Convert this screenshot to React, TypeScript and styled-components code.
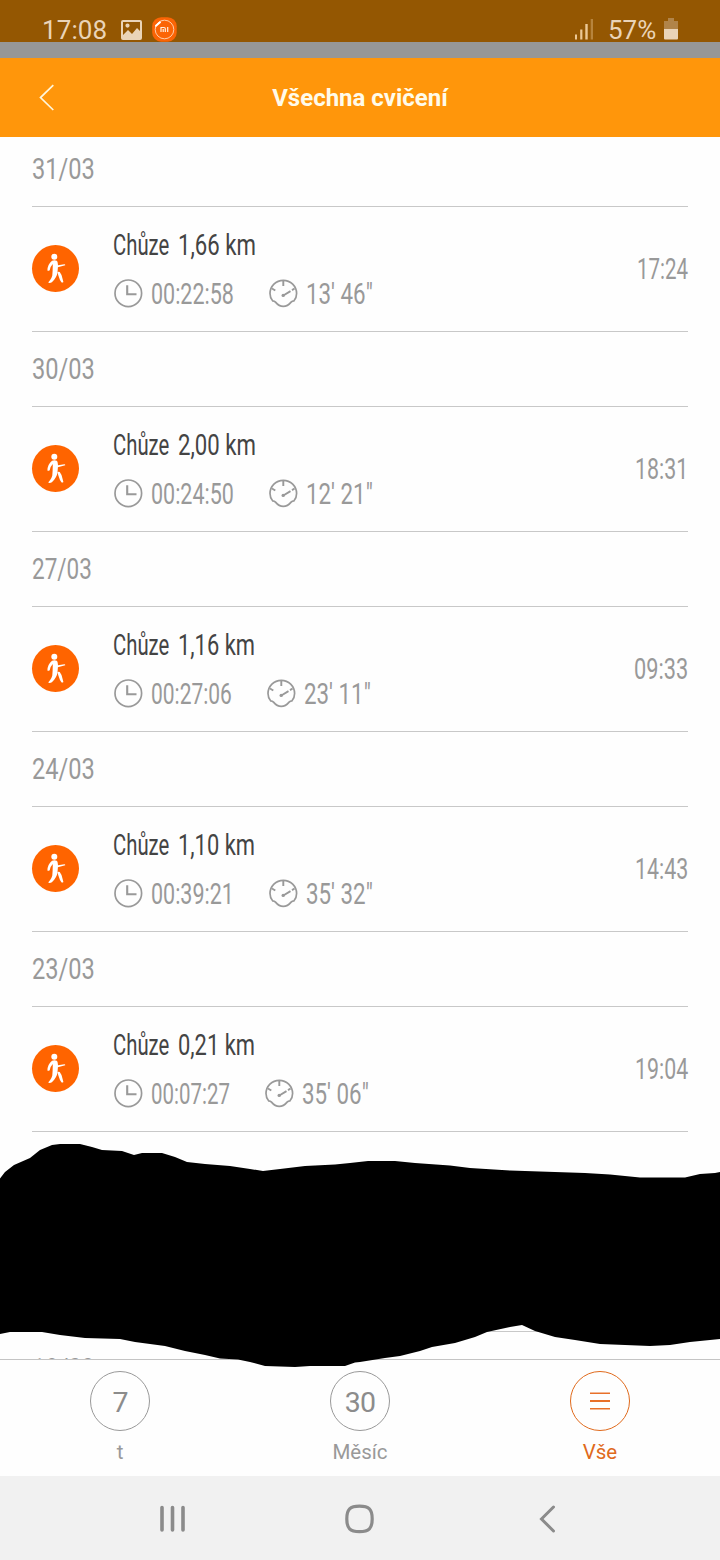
import React, { useLayoutEffect, useRef, useState } from "react";
import styled, { createGlobalStyle } from "styled-components";

const GlobalStyle = createGlobalStyle`
  * { box-sizing: border-box; }
  body { margin: 0; background: #fff; font-family: Roboto, "Liberation Sans", sans-serif; }
  svg { display: block; flex: none; }
`;

const Screen = styled.div`
  position: relative;
  display: flex;
  flex-direction: column;
  width: 720px;
  height: 1560px;
  overflow: hidden;
  background: #fefefe;
`;

const StatusBar = styled.div`
  display: flex;
  align-items: flex-start;
  height: 42px;
  flex: none;
  padding: 15px 41px 0 42px;
  background: #945702;
  color: #ead4b8;
  font-size: 26px;
  line-height: 30px;
`;

const Clock = styled.span`
  width: 65px;
  margin-right: 14px;
  letter-spacing: 0.1px;
`;

const MiIcon = styled.div`
  margin: 2px 0 0 10px;
`;

const StatusRight = styled.div`
  display: flex;
  margin-left: auto;
`;

const Percent = styled.span`
  width: 49px;
  margin: 0 7px 0 15px;
`;

const Divider = styled.div`
  flex: none;
  height: 16px;
  background: #979797;
`;

const Header = styled.header`
  display: grid;
  grid-template-columns: 60px 1fr 60px;
  align-items: center;
  flex: none;
  height: 79px;
  background: #ff960b;
  color: #fffbea;
`;

const BackButton = styled.div`
  padding-left: 38px;
`;

const Title = styled.h1`
  margin: 0;
  text-align: center;
  font-size: 24px;
  font-weight: 700;
  line-height: 30px;
`;

const List = styled.main`
  flex: none;
  height: 1222px;
  overflow: hidden;
  padding: 0 32px;
`;

const Sections = styled.div`
  margin-top: -5px;
`;

const DateHeader = styled.div`
  display: flex;
  align-items: center;
  height: 75px;
  padding-bottom: 2px;
  border-bottom: 1px solid #c8c8c8;
  color: #999;
`;

const Row = styled.div`
  display: flex;
  align-items: center;
  height: 125px;
  border-bottom: 1px solid #c8c8c8;
  color: #999;
`;

const Badge = styled.div`
  width: 47px;
  height: 47px;
  margin: 0 34px 2px 0;
  border-radius: 50%;
  background: #ff6400;
`;

const Details = styled.div`
  display: flex;
  flex-direction: column;
  gap: 14px;
  flex: 1;
  padding-top: 1px;
`;

const Line = styled.div<{ $dark?: boolean }>`
  display: flex;
  align-items: center;
  height: 35px;
  color: ${(p) => (p.$dark ? "#444" : "#999")};
`;

const Gap = styled.span<{ $w: number }>`
  flex: none;
  width: ${(p) => p.$w}px;
`;

const IconSlot = styled.span`
  flex: none;
  padding-bottom: 2px;
`;

const CondensedBox = styled.span<{ $w: number; $size: number }>`
  display: block;
  flex: none;
  width: ${(p) => p.$w}px;
  font-size: ${(p) => p.$size}px;
  line-height: 35px;
  height: 35px;
  white-space: pre;
`;

const CondensedText = styled.span`
  display: inline-block;
  transform-origin: 0 50%;
`;

/* Narrow face: squeezes the text horizontally to the given advance width. */
function Condensed({ w, size = 29, children }: { w: number; size?: number; children: string }) {
  const ref = useRef<HTMLSpanElement>(null);
  const [scale, setScale] = useState(0.78);
  useLayoutEffect(() => {
    if (ref.current) setScale(w / ref.current.offsetWidth);
  }, [w, size, children]);
  return (
    <CondensedBox $w={w} $size={size}>
      <CondensedText ref={ref} style={{ transform: `scaleX(${scale})` }}>
        {children}
      </CondensedText>
    </CondensedBox>
  );
}

const HiddenEntry = styled.div`
  height: 200px;
  border-bottom: 1px solid #c8c8c8;
`;

const Scribble = styled.svg`
  position: absolute;
  left: 0;
  top: 1140px;
  z-index: 2;
`;

const TabBar = styled.nav`
  display: grid;
  grid-template-columns: repeat(3, 240px);
  flex: none;
  height: 117px;
  border-top: 1px solid #c4c4c4;
  padding-top: 11px;
`;

const Tab = styled.div<{ $active?: boolean }>`
  display: flex;
  flex-direction: column;
  align-items: center;
  color: ${(p) => (p.$active ? "#e06a1c" : "#999")};
  font-size: 20.5px;
  line-height: 24px;
`;

const TabCircle = styled.div`
  display: flex;
  align-items: center;
  justify-content: center;
  width: 60px;
  height: 60px;
  margin-bottom: 9px;
  border: 1px solid currentColor;
  border-radius: 50%;
`;

const TabNumber = styled.span`
  padding-top: 4px;
  color: #8c8c8c;
  font-size: 28.5px;
  letter-spacing: -0.8px;
`;

const NavBar = styled.div`
  display: flex;
  align-items: center;
  flex: none;
  height: 84px;
  padding: 1px 0 0 160px;
  background: #f1f1f1;
`;

const entries = [
  { date: "31/03", dw: 63, dist: "1,66 km", distW: 78, time: "00:22:58", timeW: 83, pace: "13' 46\"", at: "17:24", atW: 51 },
  { date: "30/03", dw: 63, dist: "2,00 km", distW: 78, time: "00:24:50", timeW: 83, pace: "12' 21\"", at: "18:31", atW: 53 },
  { date: "27/03", dw: 60, dist: "1,16 km", distW: 77, time: "00:27:06", timeW: 81, pace: "23' 11\"", at: "09:33", atW: 54 },
  { date: "24/03", dw: 63, dist: "1,10 km", distW: 77, time: "00:39:21", timeW: 83, pace: "35' 32\"", at: "14:43", atW: 53 },
  { date: "23/03", dw: 63, dist: "0,21 km", distW: 77, time: "00:07:27", timeW: 79, pace: "35' 06\"", at: "19:04", atW: 53 },
];

const Walker = () => (
  <svg width="47" height="47" viewBox="0 0 47 47" fill="#fff">
    <circle cx="22.300" cy="11.700" r="3" />
    <path d="M20 15.800q2.500-1 4.700 0 1 .8 1.100 2.600l.2 1.800 6.300-1q1.200.1.900 1.100l-7.300 2-.3 4.300-.7 3.400q-.9 2.500-2.700 4.800l-2.300 2.400q-1.700 1.100-3.600.6.100-.9 1.700-2.600 1.700-2.200 2.300-4.700l.3-4.500.200-6.900q-2.300 2.300-3.100 6.100-1.200.9-2.300.3.200-6.200 4.600-9.700z" />
    <path d="M25.300 27.200q1.200-1 2.400-.2 2 2.600 2.500 5.600l1.200 4.300q-.9.900-2 .3-1.800-2.400-2.500-5.200z" />
  </svg>
);

const ClockIcon = () => (
  <svg width="30" height="30" viewBox="0 0 30 30" fill="none" stroke="#999" strokeWidth="1.700">
    <circle cx="15.300" cy="15.300" r="13.300" />
    <path d="M14.200 7.300v9h9.300" strokeWidth="2.100" />
  </svg>
);

const PaceIcon = () => (
  <svg width="30" height="30" viewBox="0 0 30 30" fill="none" stroke="#999" strokeWidth="1.700">
    <path d="M4.600 22.800C2.800 20.800 2 18.300 2 15.600a13.300 13.300 0 0 1 26.600 0c0 2.700-.8 5.200-2.600 7.200q-1.800.1-2.900 1.300c-2.300 2.800-4.900 4.300-7.800 4.300s-5.500-1.500-7.800-4.300q-1.100-1.200-2.900-1.300z" />
    <path d="M15.300 3v5M4 10.500l3.300 2M26.600 10.500l-2.600 1.600M15.300 17.500l7.200-4.400" strokeWidth="1.900" />
    <circle cx="15.200" cy="17.400" r="1.700" fill="#999" stroke="none" />
  </svg>
);

export default function App() {
  return (
    <>
      <GlobalStyle />
      <Screen>
        <StatusBar>
          <Clock>17:08</Clock>
          <svg width="21" height="25" viewBox="0 0 21 25">
            <path fillRule="evenodd" fill="#ead4b8" d="M2 5h17q2 0 2 2v16q0 2-2 2H2q-2 0-2-2V7q0-2 2-2zm0 2v13l5-5 4 4 5-6 3 3V7zM6.500 8.500a2 2 0 1 1 0 4.200 2 2 0 0 1 0-4.200z" />
          </svg>
          <MiIcon>
            <svg width="25" height="25" viewBox="0 0 25 25">
              <rect x="0.200" y="0.200" width="24.500" height="24.500" rx="9" fill="#fb6405" />
              <circle cx="12.500" cy="12.500" r="9.300" fill="none" stroke="#ffd9ba" strokeWidth="0.900" />
              <path d="M4 8.800L8 5.300" stroke="#fff" strokeWidth="2" strokeLinecap="round" />
              <path d="M9 15v-4.500h3q1.300 0 1.300 1.300V15M11.200 12v3M15.700 10v5" fill="none" stroke="#fff0df" strokeWidth="1.200" />
            </svg>
          </MiIcon>
          <StatusRight>
            <svg width="19" height="25" viewBox="0 0 19 25" fill="#ecc895">
              <rect x="1" y="19.500" width="2" height="5" />
              <rect x="6.200" y="14.500" width="2.200" height="10" />
              <rect x="11.300" y="9" width="2.400" height="15.500" />
              <rect x="16.700" y="4" width="2.300" height="20.500" opacity="0.400" />
            </svg>
            <Percent>57%</Percent>
            <svg width="15" height="25" viewBox="0 0 15 25">
              <path d="M4 3h6v3h4v8H0V6h4z" fill="#b18449" />
              <path d="M0 14h14v9.500q0 1-1 1H1q-1 0-1-1z" fill="#ead4b8" />
            </svg>
          </StatusRight>
        </StatusBar>
        <Divider />
        <Header>
          <BackButton>
            <svg width="18" height="28" viewBox="0 0 18 28" fill="none" stroke="#fff6dc" strokeWidth="1.700">
              <path d="M15.300 1.200L2.500 13.600l12.800 12.400" />
            </svg>
          </BackButton>
          <Title>Všechna cvičení</Title>
        </Header>
        <List>
          <Sections>
            {entries.map((e) => (
              <section key={e.date}>
                <DateHeader>
                  <Condensed w={e.dw} size={30}>{e.date}</Condensed>
                </DateHeader>
                <Row>
                  <Badge><Walker /></Badge>
                  <Details>
                    <Line $dark>
                      <Condensed w={56}>Chůze</Condensed>
                      <Gap $w={9} />
                      <Condensed w={e.distW}>{e.dist}</Condensed>
                    </Line>
                    <Line>
                      <IconSlot><ClockIcon /></IconSlot>
                      <Gap $w={8} />
                      <Condensed w={e.timeW}>{e.time}</Condensed>
                      <Gap $w={34} />
                      <IconSlot><PaceIcon /></IconSlot>
                      <Gap $w={8} />
                      <Condensed w={67}>{e.pace}</Condensed>
                    </Line>
                  </Details>
                  <Condensed w={e.atW}>{e.at}</Condensed>
                </Row>
              </section>
            ))}
            <HiddenEntry />
            <DateHeader>
              <Condensed w={63} size={30}>18/03</Condensed>
            </DateHeader>
          </Sections>
        </List>
        <TabBar>
          <Tab>
            <TabCircle><TabNumber>7</TabNumber></TabCircle>
            t
          </Tab>
          <Tab>
            <TabCircle><TabNumber>30</TabNumber></TabCircle>
            Měsíc
          </Tab>
          <Tab $active>
            <TabCircle>
              <svg width="20" height="20" viewBox="0 0 20 20" stroke="#e8702a">
                <path d="M0 2.200h20M0 17.700h20" strokeWidth="1.600" />
                <path d="M0 10h20" strokeWidth="2" />
              </svg>
            </TabCircle>
            Vše
          </Tab>
        </TabBar>
        <NavBar>
          <svg width="400" height="30" viewBox="0 0 400 30" fill="none" stroke="#8b8b8b">
            <path d="M2 3.500v22.500M12.500 3.500v22.500M23 3.500v22.500" strokeWidth="3.600" strokeLinecap="round" />
            <path d="M199.500 2.200c9.500 0 12.700 3.200 12.700 12.700s-3.200 12.700-12.700 12.700-12.700-3.200-12.700-12.700 3.200-12.700 12.700-12.700z" strokeWidth="3.200" />
            <path d="M393.500 3L381.500 15l12 12" strokeWidth="3" strokeLinecap="round" />
          </svg>
        </NavBar>
        <Scribble width="720" height="230" viewBox="0 1140 720 230">
          <path d="M0 1178.500L5 1172 14 1165 30 1158 40 1150 52 1145 60 1144 80 1144 92 1147 102 1150 122 1151 134 1155 142 1153 162 1153 175 1157 187 1162 205 1164 230 1166 250 1169 263 1171 280 1169 305 1166 335 1164.500 350 1163 368 1161 395 1161 415 1163 450 1165.500 470 1168 510 1170.500 585 1173 610 1174.500 640 1177.500 685 1177.500 700 1174 715 1173 720 1172V1339L710 1340 690 1342 670 1345 650 1346 600 1344 575 1340 555 1337 535 1331 522 1325 510 1327 487 1332 475 1337 455 1343 432 1347 420 1351 400 1356 385 1358 360 1362 355 1362.500 345 1366 310 1366 295 1367 265 1366 250 1362 238 1359.500 220 1358.500 205 1355 185 1351 165 1346 135 1342 120 1339 85 1338 60 1335 42 1332 10 1332 0 1334z" fill="#000" />
        </Scribble>
      </Screen>
    </>
  );
}
